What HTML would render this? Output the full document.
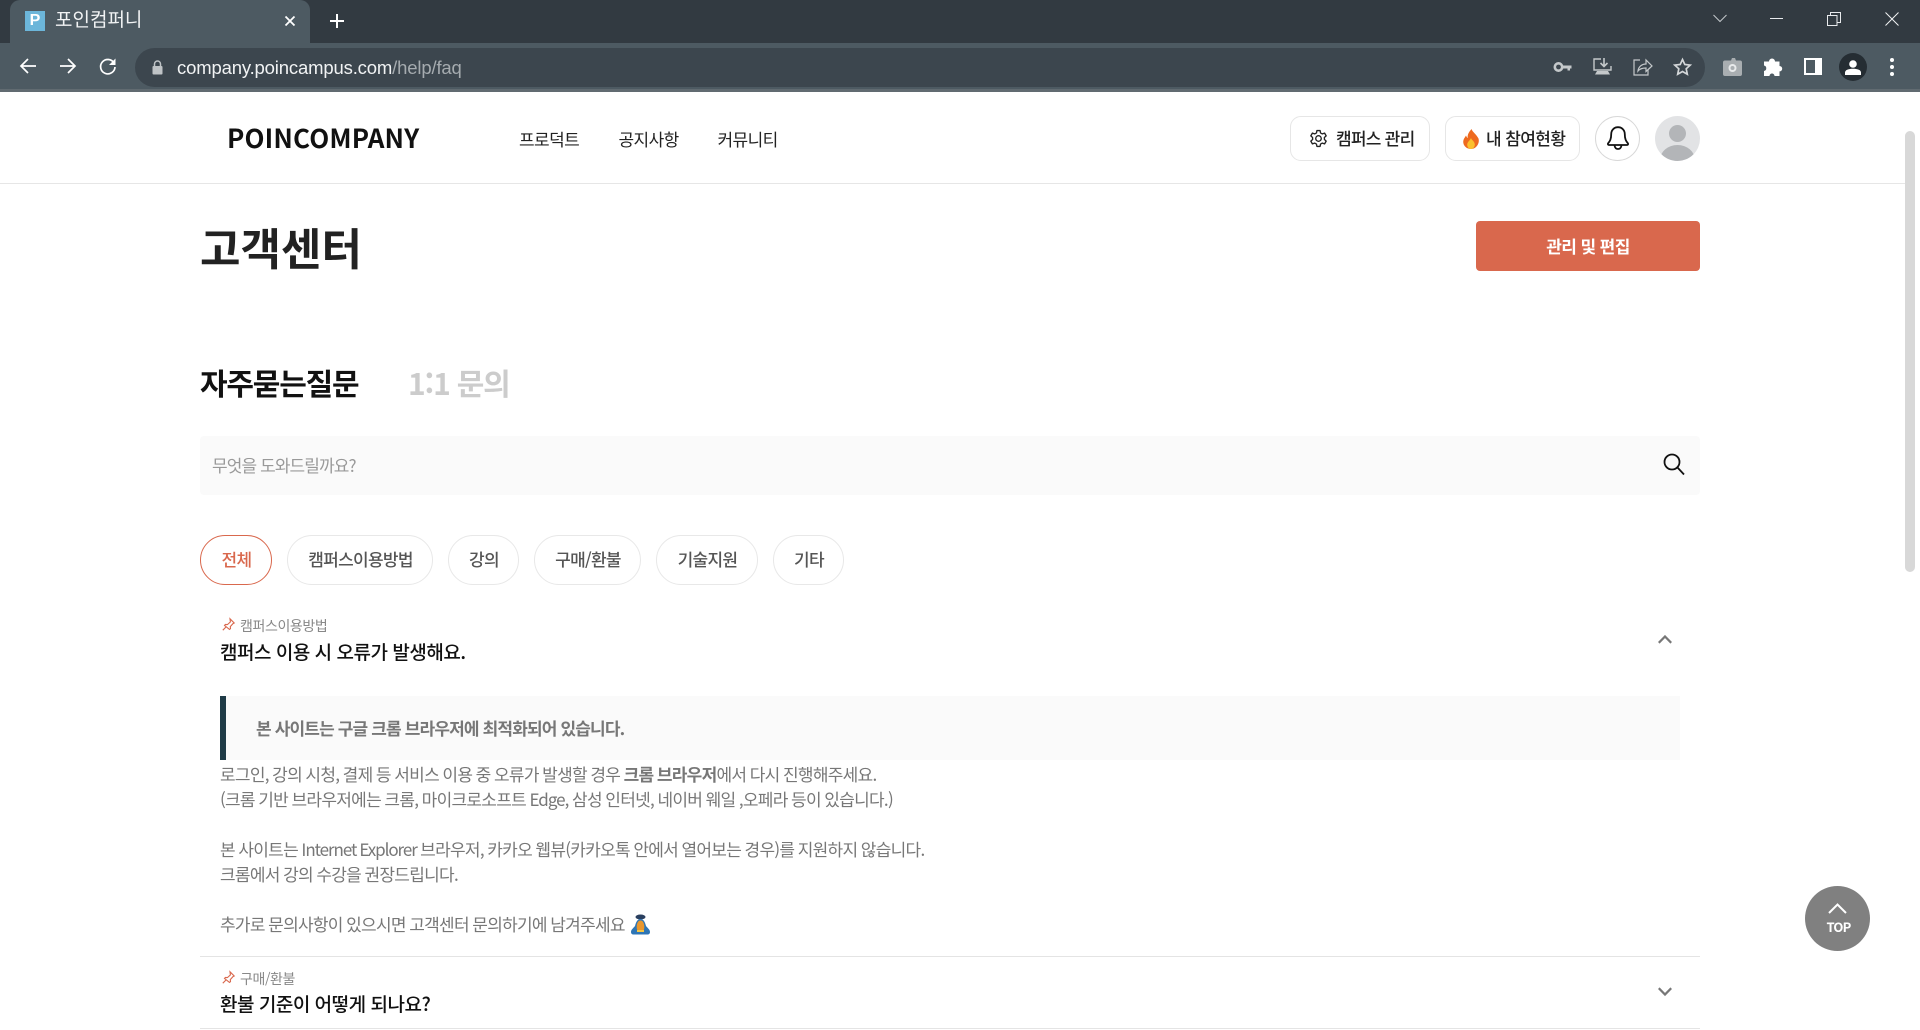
<!DOCTYPE html>
<html lang="ko">
<head>
<meta charset="utf-8">
<title>포인컴퍼니</title>
<style>
html,body{margin:0;padding:0;width:1920px;height:1030px;overflow:hidden;background:#fff}
body{position:relative;font-family:"Noto Sans CJK KR","Liberation Sans",sans-serif;color:#222}
.a{position:absolute;white-space:nowrap}
.lib{font-family:"Liberation Sans","Noto Sans CJK KR",sans-serif}
svg{position:absolute;overflow:visible}
.chip{position:absolute;top:535px;height:50px;box-sizing:border-box;border:1px solid #e8e8e8;border-radius:25px;text-align:center;line-height:46px;font-size:17px;letter-spacing:-.7px;color:#555;font-weight:500;padding-left:1px}
.box{position:absolute;top:116px;height:45px;box-sizing:border-box;border:1px solid #e6e6e6;border-radius:11px;background:#fff}
.body{left:220px;font-size:17px;line-height:25px;height:25px;color:#777;letter-spacing:-.73px;word-spacing:-.6px}
</style>
</head>
<body>
<!-- browser chrome -->
<div class="a" style="left:0;top:0;width:1920px;height:43px;background:#323a41"></div>
<div class="a" style="left:0;top:43px;width:1920px;height:48px;background:#4d5a62"></div>
<div class="a" style="left:0;top:89px;width:1920px;height:3px;background:#616b71"></div>
<div class="a" style="left:10px;top:0;width:300px;height:44px;background:#4d5a62;border-radius:10px 10px 0 0"></div>
<div class="a lib" style="left:25px;top:11px;width:20px;height:20px;background:#6cb6da;color:#fff;font-weight:700;font-size:16px;line-height:20px;text-align:center">P</div>
<div class="a lib" style="left:55px;top:7px;font-size:19px;line-height:27px;color:#f1f3f4">포인컴퍼니</div>
<svg style="left:284px;top:15px" width="12" height="12" viewBox="0 0 12 12"><path d="M1.500 1.500l9 9M10.500 1.500l-9 9" stroke="#fff" stroke-width="1.800"/></svg>
<svg style="left:329px;top:13px" width="16" height="16" viewBox="0 0 16 16"><path d="M8 1v14M1 8h14" stroke="#fff" stroke-width="2"/></svg>
<svg style="left:1713px;top:14px" width="14" height="9" viewBox="0 0 14 9"><path d="M.5 1l6.500 6.500L13.500 1" fill="none" stroke="#c4c9cc" stroke-width="1"/></svg>
<div class="a" style="left:1770px;top:18px;width:13px;height:1px;background:#e8eaed"></div>
<svg style="left:1827px;top:12px" width="14" height="14" viewBox="0 0 14 14"><path d="M.5 3.500h9.500V13.500H.5zM3.500 3.500V.5h10v10h-3.500" fill="none" stroke="#e8eaed" stroke-width="1"/></svg>
<svg style="left:1885px;top:12px" width="14" height="14" viewBox="0 0 14 14"><path d="M.5.5l13 13M13.500.5l-13 13" stroke="#f1f3f4" stroke-width="1"/></svg>

<svg style="left:19px;top:57px" width="18" height="18" viewBox="0 0 18 18"><path d="M17 9H2M9 2L2 9l7 7" fill="none" stroke="#fff" stroke-width="1.700"/></svg>
<svg style="left:59px;top:57px" width="18" height="18" viewBox="0 0 18 18"><path d="M1 9h15M9 2l7 7-7 7" fill="none" stroke="#fff" stroke-width="1.700"/></svg>
<svg style="left:99px;top:57px" width="18" height="18" viewBox="0 0 18 18"><path d="M15 6A7.200 7.200 0 1 0 16 10" fill="none" stroke="#fff" stroke-width="1.700"/><path d="M16.500 1.500v6.500h-6.500z" fill="#fff"/></svg>

<div class="a" style="left:135px;top:48px;width:1570px;height:39px;background:#3c464e;border-radius:20px"></div>
<svg style="left:152px;top:60px" width="11" height="15" viewBox="0 0 11 15"><path d="M2.500 6V4a3 3 0 0 1 6 0v2" fill="none" stroke="#bfc3c6" stroke-width="1.500"/><rect x="0.500" y="6" width="10" height="8.500" rx="1" fill="#bfc3c6"/></svg>
<div class="a lib" style="left:177px;top:55px;font-size:18.500px;line-height:25px;letter-spacing:-.16px;color:#f1f3f4">company.poincampus.com<span style="color:#a5abaf">/help/faq</span></div>

<!-- toolbar icons -->
<svg style="left:1553px;top:60px" width="19" height="14" viewBox="0 0 19 14"><circle cx="5.500" cy="7" r="3.700" fill="none" stroke="#c4c8ca" stroke-width="2.600"/><path d="M9 5.500h9.500v3H17v2h-2.500v-2H9z" fill="#c4c8ca"/></svg>
<svg style="left:1593px;top:58px" width="19" height="18" viewBox="0 0 19 18"><path d="M8 1H1v11h17V8" fill="none" stroke="#c4c8ca" stroke-width="1.400"/><path d="M11 0v8M7.500 5l3.500 3.500L14.500 5" fill="none" stroke="#c4c8ca" stroke-width="1.600"/><path d="M4 13h11l2 3.500H2z" fill="#c4c8ca"/></svg>
<svg style="left:1633px;top:58px" width="20" height="18" viewBox="0 0 20 18"><path d="M7 2H1v15h14v-5" fill="none" stroke="#c4c8ca" stroke-width="1.200"/><path d="M5 13c.500-4.500 4-7 8-7V2l6 6-6 5.500V10c-3 0-6 .500-8 3z" fill="none" stroke="#c4c8ca" stroke-width="1.200"/></svg>
<svg style="left:1673px;top:58px" width="19" height="18" viewBox="0 0 19 18"><path d="M9.500 1.500l2.300 5 5.400.600-4 3.700 1.100 5.400-4.800-2.700-4.800 2.700 1.100-5.400-4-3.700 5.400-.600z" fill="none" stroke="#d4d7d9" stroke-width="1.700"/></svg>
<svg style="left:1723px;top:58px" width="19" height="18" viewBox="0 0 19 18"><path d="M6 2.500h2l1-2.500h3l1 2.500h4a2 2 0 0 1 2 2V16a2 2 0 0 1-2 2H2a2 2 0 0 1-2-2V4.500a2 2 0 0 1 2-2z" fill="#a9aeb1" transform="translate(0 0)"/><circle cx="9.500" cy="10" r="4" fill="#e8eaeb"/><circle cx="9.500" cy="10" r="2" fill="#a9aeb1"/></svg>
<svg style="left:1763px;top:58px" width="18" height="18" viewBox="0 0 18 18"><path d="M6 3.500a3 3 0 0 1 6 0h4.500v4.500a2.700 2.700 0 0 1 0 5.400V18h-5a2.500 2.500 0 0 0-5 0H1v-5a2.800 2.800 0 0 0 0-5.500V3.500z" fill="#fff"/></svg>
<div class="a" style="left:1804px;top:58px;width:18px;height:17px;box-sizing:border-box;background:#fff;border:0 solid #fff"><div style="position:absolute;left:2px;top:2px;width:9px;height:13px;background:#4d5a62"></div></div>
<div class="a" style="left:1839px;top:53px;width:28px;height:28px;border-radius:50%;background:#252d33"></div>
<svg style="left:1845px;top:60px" width="16" height="15" viewBox="0 0 16 15"><circle cx="8" cy="4" r="3.800" fill="#fff"/><path d="M0 15v-2.500C0 10 4 8.800 8 8.800s8 1.200 8 3.700V15z" fill="#fff"/></svg>
<div class="a" style="left:1890px;top:58px;width:4px;height:4px;border-radius:50%;background:#fff;box-shadow:0 7px 0 #fff,0 14px 0 #fff"></div>

<!-- page header -->
<div class="a" style="left:0;top:183px;width:1905px;height:1px;background:#e6e6e6"></div>
<div class="a" style="left:227px;top:122px;font-size:26px;line-height:32px;font-weight:700;letter-spacing:.15px;color:#111">POINCOMPANY</div>
<div class="a" style="left:519px;top:126px;font-size:17px;line-height:25px;letter-spacing:-.6px;color:#222">프로덕트</div>
<div class="a" style="left:618.500px;top:126px;font-size:17px;line-height:25px;letter-spacing:-.6px;color:#222">공지사항</div>
<div class="a" style="left:717.500px;top:126px;font-size:17px;line-height:25px;letter-spacing:-.6px;color:#222">커뮤니티</div>

<div class="box" style="left:1290px;width:140px"></div>
<svg style="left:1309px;top:129px" width="19" height="19" viewBox="0 0 24 24"><path d="M12 8.500a3.500 3.500 0 1 0 0 7 3.500 3.500 0 0 0 0-7z" fill="none" stroke="#222" stroke-width="1.700"/><path d="M10 2h4l.600 3 2.200 1.200 2.900-1 2 3.500-2.300 2 .100 2.600 2.200 2-2 3.500-2.900-1L14.600 19l-.600 3h-4l-.600-3-2.200-1.200-2.900 1-2-3.500 2.300-2-.100-2.600-2.200-2 2-3.500 2.900 1L9.400 5z" fill="none" stroke="#222" stroke-width="1.700" stroke-linejoin="round"/></svg>
<div class="a" style="left:1336px;top:125px;font-size:17px;line-height:25px;letter-spacing:-.75px;font-weight:500;color:#222">캠퍼스 관리</div>
<div class="box" style="left:1445px;width:135px"></div>
<svg style="left:1462px;top:129px" width="18" height="20" viewBox="0 0 18 20"><path d="M9.500 0c1 3 5 5.500 7 9.500 1.500 5-2.500 10.500-7.500 10.500S.2 15.500 1.500 11c.6-2 1.800-3 2.500-4.500.5 1.200 1 2 1.700 2.500C5.200 5 7.500 2.500 9.500 0z" fill="#ee6a1f"/><path d="M9 9c.5 2 3.800 3.500 3.800 6.500 0 2.500-1.800 4.500-3.800 4.500s-3.800-2-3.800-4.300C5.200 13 8 11.500 9 9z" fill="#fbc02d"/></svg>
<div class="a" style="left:1486px;top:125px;font-size:17px;line-height:25px;letter-spacing:-.6px;font-weight:500;color:#222">내 참여현황</div>
<div class="a" style="left:1595px;top:116px;width:45px;height:45px;box-sizing:border-box;border:1px solid #d8d8d8;border-radius:50%"></div>
<svg style="left:1607px;top:126px" width="22" height="25" viewBox="0 0 22 25"><path d="M11 1.200c-4 0-6.800 3-6.800 7 0 5-1.300 7-3 9-.6.800-.2 1.800.8 1.800h18c1 0 1.400-1 .8-1.800-1.700-2-3-4-3-9 0-4-2.800-7-6.800-7z" fill="none" stroke="#111" stroke-width="1.800"/><path d="M7.500 19.500c.5 2.500 2 3.500 3.500 3.500s3-1 3.500-3.500" fill="none" stroke="#111" stroke-width="1.800"/></svg>
<div class="a" style="left:1655px;top:116px;width:45px;height:45px;border-radius:50%;background:#e2e3e5;overflow:hidden"><div style="position:absolute;left:14px;top:9px;width:17px;height:17px;border-radius:50%;background:#b3b5b8"></div><div style="position:absolute;left:5px;top:29px;width:35px;height:30px;border-radius:50%;background:#b3b5b8"></div></div>

<!-- title -->
<div class="a" style="left:200px;top:214px;font-size:44px;line-height:64px;font-weight:700;letter-spacing:0;color:#222">고객센터</div>
<div class="a" style="left:1476px;top:221px;width:224px;height:50px;background:#d9684d;border-radius:4px;color:#fff;font-size:17px;font-weight:700;text-align:center;line-height:49px;letter-spacing:-.6px">관리 및 편집</div>

<div class="a" style="left:200px;top:360px;font-size:30px;line-height:44px;font-weight:700;letter-spacing:-1.200px;color:#111">자주묻는질문</div>
<div class="a" style="left:408px;top:360px;font-size:30px;line-height:44px;font-weight:700;letter-spacing:-1.200px;color:#ccc">1:1 문의</div>

<!-- search -->
<div class="a" style="left:200px;top:436px;width:1500px;height:59px;background:#fafafa;border-radius:4px"></div>
<div class="a" style="left:212px;top:452px;font-size:17px;line-height:25px;letter-spacing:-.9px;color:#999">무엇을 도와드릴까요?</div>
<svg style="left:1663px;top:453px" width="22" height="23" viewBox="0 0 22 23"><circle cx="9" cy="9" r="7.500" fill="none" stroke="#111" stroke-width="1.800"/><path d="M14.500 14.500l6.500 7" stroke="#111" stroke-width="1.800"/></svg>

<!-- chips -->
<div class="chip" style="left:200px;width:72px;border-color:#d9684d;color:#d9684d">전체</div>
<div class="chip" style="left:287px;width:146px">캠퍼스이용방법</div>
<div class="chip" style="left:448px;width:71px">강의</div>
<div class="chip" style="left:534px;width:107px">구매/환불</div>
<div class="chip" style="left:656px;width:102px">기술지원</div>
<div class="chip" style="left:773px;width:71px">기타</div>

<!-- item 1 -->
<svg style="left:222px;top:618px" width="13" height="13" viewBox="0 0 13 13"><path d="M8 .8l4.200 4.200-1.200.6-2.700 3 .2 2-1 .8L2.500 7.400l.9-1 2 .2 3-2.700z" fill="none" stroke="#d9684d" stroke-width="1.100"/><path d="M4 9L.8 12.200" stroke="#d9684d" stroke-width="1.100"/></svg>
<div class="a" style="left:240px;top:616px;font-size:14px;line-height:21px;letter-spacing:-.4px;color:#888">캠퍼스이용방법</div>
<div class="a" style="left:220px;top:638px;font-size:19px;line-height:28px;font-weight:500;letter-spacing:-.48px;color:#111">캠퍼스 이용 시 오류가 발생해요.</div>
<svg style="left:1658px;top:635px" width="14" height="9" viewBox="0 0 14 9"><path d="M.8 7.800L7 1.500l6.200 6.300" fill="none" stroke="#777" stroke-width="2.200"/></svg>

<div class="a" style="left:220px;top:696px;width:1460px;height:64px;background:#fafafa"></div>
<div class="a" style="left:220px;top:696px;width:6px;height:64px;background:#1f3b47"></div>
<div class="a" style="left:256px;top:715px;font-size:17px;line-height:25px;font-weight:700;letter-spacing:-.85px;color:#777">본 사이트는 구글 크롬 브라우저에 최적화되어 있습니다.</div>

<div class="a body" style="top:761px">로그인, 강의 시청, 결제 등 서비스 이용 중 오류가 발생할 경우 <b>크롬 브라우저</b>에서 다시 진행해주세요.</div>
<div class="a body" style="top:786px">(크롬 기반 브라우저에는 크롬, 마이크로소프트 <span style="letter-spacing:-1px">Edge</span>, 삼성 인터넷, 네이버 웨일 ,오페라 등이 있습니다.)</div>
<div class="a body" style="top:836px">본 사이트는 <span style="letter-spacing:-1.080px">Internet Explorer</span> 브라우저, 카카오 웹뷰(카카오톡 안에서 열어보는 경우)를 지원하지 않습니다.</div>
<div class="a body" style="top:861px">크롬에서 강의 수강을 권장드립니다.</div>
<div class="a body" style="top:911px">추가로 문의사항이 있으시면 고객센터 문의하기에 남겨주세요</div>
<svg style="left:630px;top:914px" width="21" height="21" viewBox="0 0 21 21"><ellipse cx="10.500" cy="3" rx="5" ry="2.500" fill="#2a3f5f"/><path d="M10.500 5c-3 0-4.500 3-5.500 7-1.500 2-4 3.500-4 6 0 1.500 1 2.500 2.500 2.500h14c1.500 0 2.500-1 2.500-2.500 0-2.500-2.500-4-4-6-1-4-2.500-7-5.500-7z" fill="#2e75b5"/><path d="M10.500 6.500c-2.500 0-3.800 3-3.800 6.500s1.500 5 3.800 5 3.800-1.500 3.800-5-1.300-6.500-3.800-6.500z" fill="#e8962e"/><path d="M7 16h7v2H7z" fill="#f5c542"/></svg>

<div class="a" style="left:200px;top:956px;width:1500px;height:1px;background:#e4e4e4"></div>

<!-- item 2 -->
<svg style="left:222px;top:971px" width="13" height="13" viewBox="0 0 13 13"><path d="M8 .8l4.200 4.200-1.200.6-2.700 3 .2 2-1 .8L2.500 7.400l.9-1 2 .2 3-2.700z" fill="none" stroke="#d9684d" stroke-width="1.100"/><path d="M4 9L.8 12.200" stroke="#d9684d" stroke-width="1.100"/></svg>
<div class="a" style="left:240px;top:969px;font-size:14px;line-height:21px;letter-spacing:-.4px;color:#888">구매/환불</div>
<div class="a" style="left:220px;top:990px;font-size:19px;line-height:28px;font-weight:500;letter-spacing:-.48px;color:#111">환불 기준이 어떻게 되나요?</div>
<svg style="left:1658px;top:987px" width="14" height="9" viewBox="0 0 14 9"><path d="M.8 1.200L7 7.500l6.200-6.300" fill="none" stroke="#777" stroke-width="2.200"/></svg>
<div class="a" style="left:200px;top:1028px;width:1500px;height:1px;background:#e4e4e4"></div>

<!-- top button -->
<div class="a" style="left:1805px;top:886px;width:65px;height:65px;border-radius:50%;background:#808080"></div>
<svg style="left:1828px;top:903px" width="19" height="11" viewBox="0 0 19 11"><path d="M1 10l8.500-8.500L18 10" fill="none" stroke="#fff" stroke-width="2"/></svg>
<div class="a" style="left:1806px;top:917px;width:65px;text-align:center;font-size:13px;line-height:20px;font-weight:700;letter-spacing:-.8px;color:#fff">TOP</div>

<!-- scrollbar -->
<div class="a" style="left:1905px;top:131px;width:10px;height:441px;border-radius:5px;background:#d8d8d8"></div>
</body>
</html>
